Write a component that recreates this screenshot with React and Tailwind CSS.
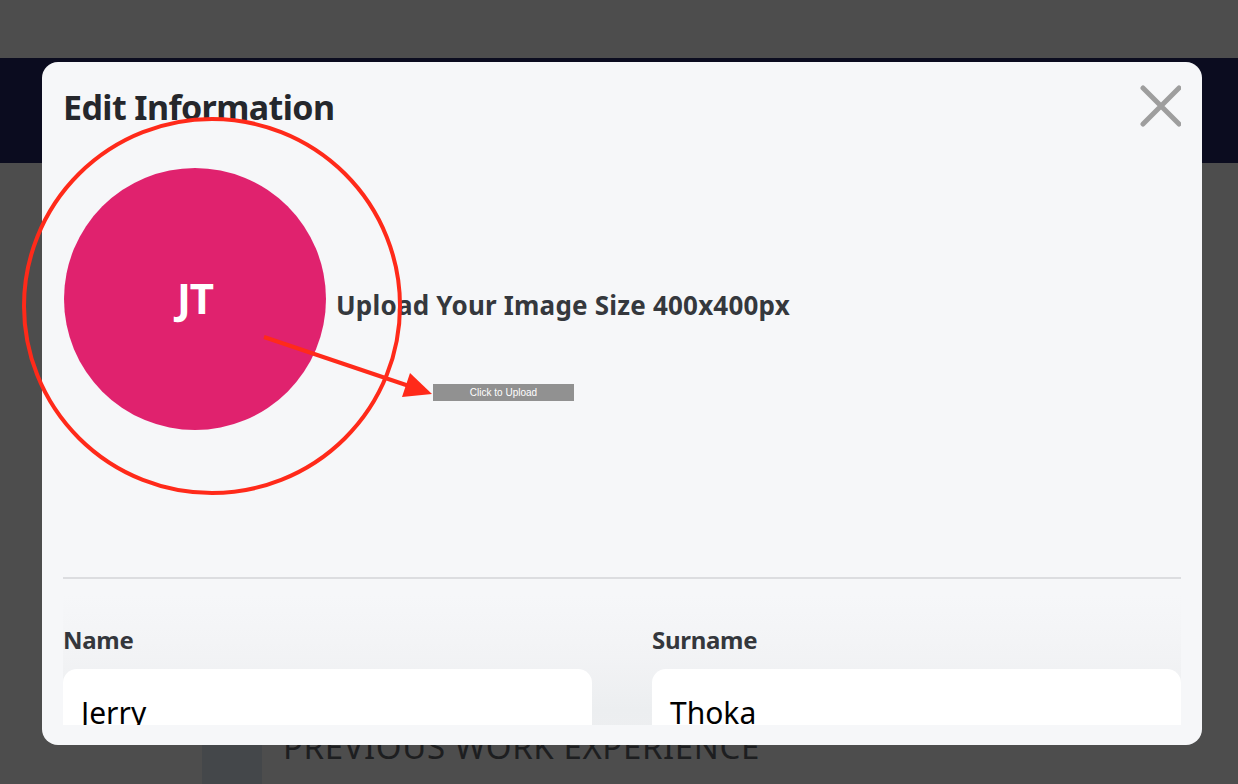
const font = { fontFamily: '"Noto Sans", "Open Sans", Arial, sans-serif' };

function CloseIcon() {
  return (
    <svg width="44" height="44" viewBox="0 0 44 44" fill="none">
      <path
        d="M4 4L40 40M40 4L4 40"
        stroke="#9e9e9e"
        strokeWidth="5"
        strokeLinecap="round"
      />
    </svg>
  );
}

function Field({ label, value }) {
  return (
    <div className="flex flex-col">
      <label className="text-[24px] font-bold text-[#34373c] tracking-[-0.3px] leading-[30px]">
        {label}
      </label>
      <div className="mt-[14px] h-[80px] bg-white rounded-[14px] pl-[18px] pt-[26px]">
        <span className="text-[30px] leading-[36px] text-black">{value}</span>
      </div>
    </div>
  );
}

export default function App() {
  return (
    <div className="relative h-screen w-full overflow-hidden bg-[#4d4d4d]" style={font}>
      {/* page behind the overlay */}
      <div className="h-[58px]" />
      <div className="h-[105px] bg-[#0b0c1f]" />
      <div className="flex items-start gap-[21px] pl-[202px] pt-[560px]">
        <div className="w-[60px] h-[80px] bg-[#44474a] mt-[22px]" />
        <h2 className="text-[33px] text-[#1d1e20] tracking-[0.6px] leading-[40px] mt-[4px]">
          PREVIOUS WORK EXPERIENCE
        </h2>
      </div>

      {/* modal */}
      <div className="absolute left-[42px] top-[62px] w-[1160px] h-[683px] bg-[#f6f7f9] rounded-[16px] p-[21px] pb-[20px]">
        <div className="h-full overflow-hidden">
          <div className="flex items-start justify-between h-[44px]">
            <h1 className="text-[34px] font-bold text-[#25272c] tracking-[-0.6px] leading-[44px] mt-[2px]">
              Edit Information
            </h1>
            <button className="mr-[-2px] mt-[1px]">
              <CloseIcon />
            </button>
          </div>

          <div className="flex items-start h-[450px] pl-[1px]">
            <div className="mt-[41px] w-[262px] h-[262px] rounded-full bg-[#e0226e] flex items-center justify-center shrink-0">
              <span className="text-white text-[42px] font-bold tracking-[-1px] -mt-[4px]">JT</span>
            </div>
            <div className="flex flex-col items-start ml-[10px] mt-[160px]">
              <p className="text-[26px] font-bold text-[#35383d] tracking-[0.2px] leading-[36px]">
                Upload Your Image Size 400x400px
              </p>
              <button
                className="mt-[61px] ml-[97px] w-[141px] h-[17px] bg-[#919191] text-white text-[10px] leading-[17px] text-center"
                style={{ fontFamily: '"Liberation Sans", Arial, sans-serif' }}
              >
                Click to Upload
              </button>
            </div>
          </div>

          <div className="h-[2px] bg-[#dcdde0]" />

          <div className="mt-[16px] bg-[linear-gradient(to_bottom,#f6f7f9_0%,#f2f3f5_40%,#eceef0_75%,#eeeff1_100%)] pt-[30px] grid grid-cols-2 gap-x-[60px]">
            <Field label="Name" value="Jerry" />
            <Field label="Surname" value="Thoka" />
          </div>
        </div>
      </div>

      {/* annotation */}
      <svg className="absolute inset-0 pointer-events-none" width="1238" height="784">
        <ellipse cx="212" cy="306" rx="188" ry="187" fill="none" stroke="#ff2a1a" strokeWidth="4" />
        <line x1="264" y1="337" x2="412" y2="387" stroke="#ff2a1a" strokeWidth="4" />
        <polygon points="432,394 402,397 410,373" fill="#ff2a1a" />
      </svg>
    </div>
  );
}
